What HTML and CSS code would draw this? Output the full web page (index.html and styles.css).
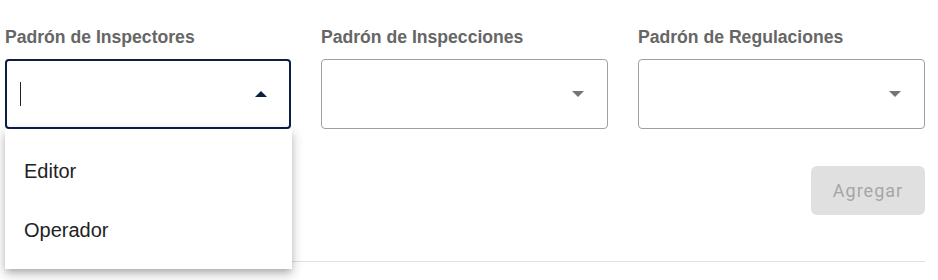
FILE: index.html
```html
<!DOCTYPE html>
<html lang="es">
<head>
<meta charset="utf-8">
<link rel="stylesheet" href="styles.css">
</head>
<body>
<div class="page">
  <div class="fields">
    <div class="field">
      <div class="label">Padrón de Inspectores</div>
      <div class="select active">
        <span class="caret"></span>
        <span class="arrow up"></span>
        <div class="menu">
          <div class="item">Editor</div>
          <div class="item">Operador</div>
        </div>
      </div>
    </div>
    <div class="field">
      <div class="label">Padrón de Inspecciones</div>
      <div class="select">
        <span class="arrow down"></span>
      </div>
    </div>
    <div class="field">
      <div class="label">Padrón de Regulaciones</div>
      <div class="select">
        <span class="arrow down"></span>
      </div>
    </div>
  </div>
  <div class="actions">
    <button class="btn" disabled>Agregar</button>
  </div>
  <div class="divider"></div>
</div>
</body>
</html>
```
FILE: styles.css
```css
html, body {
  margin: 0;
  padding: 0;
  background: #fff;
}
.page {
  width: 920px;
  padding: 27px 0 18px 5px;
  font-family: "Liberation Sans", Arial, sans-serif;
}
.fields {
  display: grid;
  grid-template-columns: 286px 287px 287px;
  column-gap: 30px;
}
.label {
  font-size: 17.6px;
  font-weight: bold;
  color: #666;
  line-height: 20px;
  margin-bottom: 12px;
}
.select {
  position: relative;
  box-sizing: border-box;
  height: 70px;
  border: 1px solid #a0a0a0;
  border-radius: 4px;
  display: flex;
  align-items: center;
  justify-content: space-between;
  padding: 0 23px 0 14px;
}
.select.active {
  border: 2px solid #0b1f45;
  padding: 0 22px 0 13px;
}
.caret {
  width: 1px;
  height: 24px;
  background: #222;
}
.arrow {
  width: 0;
  height: 0;
  border-left: 6.5px solid transparent;
  border-right: 6.5px solid transparent;
  margin-left: auto;
}
.arrow.up {
  border-bottom: 6.5px solid #0b1f45;
}
.arrow.down {
  border-top: 6.5px solid #757575;
}
.menu {
  position: absolute;
  left: -2px;
  top: 68px;
  width: 287px;
  background: #fff;
  padding: 13px 0 9px;
  box-shadow: 0 4px 6px -2px rgba(0,0,0,0.18), 0 6px 10px 1px rgba(0,0,0,0.12), 0 2px 12px 1px rgba(0,0,0,0.1);
  z-index: 2;
}
.item {
  height: 59px;
  line-height: 59px;
  padding-left: 19px;
  font-size: 20px;
  color: #222;
}
.actions {
  display: flex;
  justify-content: flex-end;
  margin-top: 37px;
}
.btn {
  width: 114px;
  height: 49px;
  border: none;
  border-radius: 6px;
  background: #e0e0e0;
  color: #a6a6a6;
  font-family: Roboto, "Liberation Sans", sans-serif;
  font-size: 18px;
  letter-spacing: 1px;
  padding: 0;
}
.divider {
  margin-top: 46px;
  height: 1px;
  background: #e0e0e0;
}
```
